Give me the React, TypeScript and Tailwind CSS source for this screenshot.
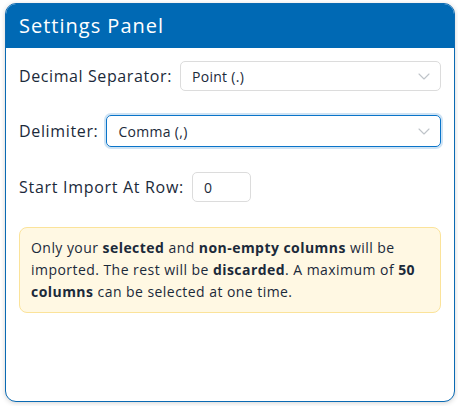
import React from "react";

const Chevron = () => (
  <svg width="12" height="7" viewBox="0 0 12 7" fill="none" className="shrink-0">
    <path d="M1 1l5 5 5-5" stroke="#bfc4c9" strokeWidth="1.1" strokeLinecap="round" strokeLinejoin="round" />
  </svg>
);

export default function App() {
  return (
    <div className="w-[458px] h-[406px] bg-white pt-[3px] pl-[5px]" style={{ fontFamily: '"Open Sans", "Noto Sans", sans-serif' }}>
      <div className="w-[450px] h-[399px] rounded-[11px] border border-[#0a6ab3] bg-white overflow-hidden shadow-[0_1px_5px_rgba(0,0,0,0.18)] flex flex-col">
        <div className="h-[44px] bg-[#0069b4] flex items-center px-[13px] shrink-0">
          <span className="text-white text-[20px] leading-none tracking-[1px]">Settings Panel</span>
        </div>
        <div className="flex flex-col px-[13px] pt-[13px] text-[#1b2a3a]">
          <div className="flex items-center gap-[8px] h-[30px]">
            <span className="text-[16px] whitespace-nowrap tracking-[0.6px]">Decimal Separator:</span>
            <div className="flex-1 h-[30px] rounded-[5px] border border-[#dcdcdc] flex items-center justify-between pl-[11px] pr-[10px]">
              <span className="text-[14px] tracking-[0.3px]">Point (.)</span>
              <Chevron />
            </div>
          </div>
          <div className="flex items-center gap-[8px] h-[32px] mt-[24px]">
            <span className="text-[16px] whitespace-nowrap tracking-[0.65px]">Delimiter:</span>
            <div className="flex-1 h-[32px] rounded-[5px] border border-[#0a74c9] shadow-[0_0_0_2px_rgba(10,116,201,0.2)] flex items-center justify-between pl-[11px] pr-[10px]">
              <span className="text-[14px] tracking-[0.3px]">Comma (,)</span>
              <Chevron />
            </div>
          </div>
          <div className="flex items-center gap-[8px] h-[30px] mt-[25px]">
            <span className="text-[16px] whitespace-nowrap tracking-[0.7px]">Start Import At Row:</span>
            <div className="w-[59px] h-[30px] rounded-[5px] border border-[#dcdcdc] flex items-center pl-[11px]">
              <span className="text-[14px]">0</span>
            </div>
          </div>
          <div className="mt-[25px] rounded-[8px] border border-[#fbe39a] bg-[#fff8e3] px-[11px] py-[9px] text-[14px] leading-[22px] tracking-[0.45px]">
            Only your <b>selected</b> and <b>non-empty columns</b> will be imported. The rest will be <b>discarded</b>. A maximum of <b>50 columns</b> can be selected at one time.
          </div>
        </div>
      </div>
    </div>
  );
}
